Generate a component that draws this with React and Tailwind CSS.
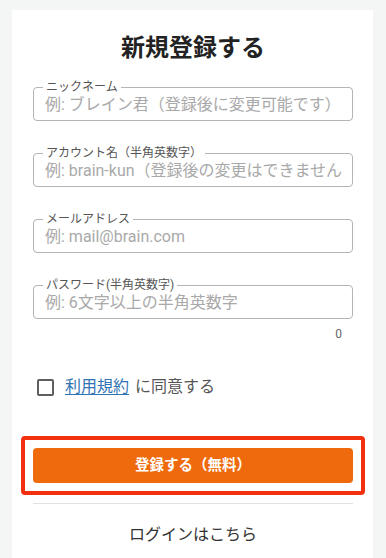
import React from "react";

const font = { fontFamily: 'Roboto, "Noto Sans CJK JP", "Noto Sans", sans-serif' };

function Field({ label, placeholder, type = "text" }) {
  return (
    <div className="relative h-[34px] rounded-[4px] border border-[#b4b4b4]">
      <span className="absolute -top-[7px] left-[9px] bg-white px-[3px] text-[12px] leading-[12px] text-[#555555]">
        {label}
      </span>
      <input
        type={type}
        placeholder={placeholder}
        className="h-full w-full rounded-[4px] bg-transparent pl-[11px] pr-[10px] text-[16px] text-[#333333] placeholder:text-[#a9a9a9] outline-none"
      />
    </div>
  );
}

export default function App() {
  return (
    <div className="min-h-[558px] w-[386px] overflow-hidden bg-[#f4f6f6] pt-[10px]" style={font}>
      <div className="ml-[12px] min-h-[548px] w-[361px] bg-white pl-[21px] pr-[20px] pt-[22px] pb-[20px]">
        <h1 className="text-center text-[24px] font-bold leading-[32px] text-[#222222]">新規登録する</h1>
        <div className="mt-[23px] flex flex-col gap-[32px]">
          <Field label="ニックネーム" placeholder="例: ブレイン君（登録後に変更可能です）" />
          <Field label="アカウント名（半角英数字）" placeholder="例: brain-kun（登録後の変更はできません）" />
          <Field label="メールアドレス" placeholder="例: mail@brain.com" />
          <Field label="パスワード(半角英数字)" placeholder="例: 6文字以上の半角英数字" type="password" />
        </div>
        <div className="mt-[7px] pr-[11px] text-right text-[12px] leading-[16px] text-[#666666]">0</div>
        <label className="mt-[33px] flex items-center text-[16px] leading-[24px]">
          <span className="ml-[4px] h-[17px] w-[17px] rounded-[2px] border-2 border-[#5f5f5f]" />
          <a className="ml-[11px] text-[#2f74b5] underline underline-offset-2" href="#">利用規約</a>
          <span className="ml-[6px] text-[#555555]">に同意する</span>
        </label>
        <div className="-mx-[12px] mt-[37px] rounded-[4px] border-4 border-[#f2300f] p-[8px]">
          <button className="flex h-[35px] w-full items-center justify-center rounded-[4px] bg-[#ef6a0c] text-[14.5px] font-bold text-white">
            登録する（無料）
          </button>
        </div>
        <div className="mt-[8px] h-px bg-[#e2e2e2]" />
        <div className="mt-[19px] text-center text-[16px] leading-[24px] text-[#333333]">ログインはこちら</div>
      </div>
    </div>
  );
}
